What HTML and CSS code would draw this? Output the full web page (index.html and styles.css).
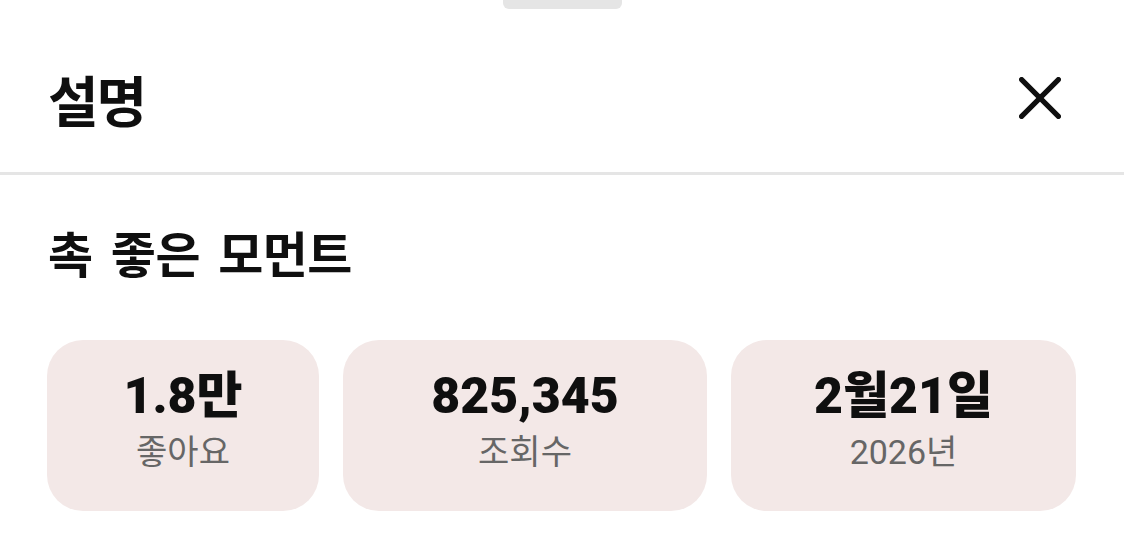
FILE: index.html
```html
<!DOCTYPE html>
<html lang="ko">
<head>
<meta charset="utf-8">
<title>설명</title>
<link rel="stylesheet" href="styles.css">
</head>
<body>
<div class="sheet">
  <div class="handle-row"><div class="handle"></div></div>
  <header class="header">
    <h1 class="title">설명</h1>
    <button class="close" aria-label="닫기">
      <svg width="42" height="42" viewBox="0 0 42 42" fill="none" stroke="#0f0f0f" stroke-width="5.2" stroke-linecap="round">
        <path d="M2.6 2.6 L39.4 39.4 M39.4 2.6 L2.6 39.4"/>
      </svg>
    </button>
  </header>
  <section class="content">
    <h2 class="video-title">촉 좋은 모먼트</h2>
    <div class="stats">
      <div class="stat"><div class="value">1.8만</div><div class="label">좋아요</div></div>
      <div class="stat"><div class="value">825,345</div><div class="label">조회수</div></div>
      <div class="stat"><div class="value">2월21일</div><div class="label">2026년</div></div>
    </div>
  </section>
</div>
</body>
</html>
```
FILE: styles.css
```css
* { box-sizing: border-box; }
html, body { margin: 0; padding: 0; background: #ffffff; }
body {
  width: 1124px;
  height: 556px;
  overflow: hidden;
  font-family: "Roboto", "Noto Sans CJK KR", sans-serif;
  color: #0f0f0f;
}
.sheet { display: flex; flex-direction: column; }
.handle-row { display: flex; justify-content: center; height: 9px; }
.handle {
  width: 119px;
  height: 9px;
  background: #e5e5e5;
  border-radius: 0 0 6px 6px;
}
.header {
  height: 166px;
  display: flex;
  align-items: center;
  justify-content: space-between;
  padding: 14px 63px 0 48px;
  border-bottom: 3px solid #e5e5e5;
}
.title {
  margin: 0;
  font-family: "Noto Sans CJK KR", sans-serif;
  font-size: 55px;
  font-weight: 700;
  line-height: 1.2;
  letter-spacing: -2px;
}
.close {
  border: 0;
  background: none;
  padding: 0;
  width: 42px;
  height: 42px;
  display: flex;
  align-items: center;
  justify-content: center;
}
.close svg { width: 42px; height: 42px; }
.content { padding: 48px 47px 0 47px; }
.video-title {
  margin: 0 0 0 1px;
  font-family: "Noto Sans CJK KR", sans-serif;
  font-size: 49px;
  font-weight: 700;
  line-height: 1.2;
  letter-spacing: -0.5px;
  word-spacing: 5px;
}
.stats {
  margin-top: 58px;
  display: grid;
  grid-template-columns: 272px 364px 345px;
  column-gap: 24px;
}
.stat {
  height: 171px;
  background: #f3e8e7;
  border-radius: 36px;
  display: flex;
  flex-direction: column;
  align-items: center;
  justify-content: center;
  padding-bottom: 8px;
}
.value {
  font-size: 50px;
  font-weight: 900;
  line-height: 1.1;
}
.value-tight { letter-spacing: -2px; }
.label {
  margin-top: 8px;
  font-size: 34px;
  font-weight: 400;
  line-height: 1.2;
  color: #666666;
}
```
